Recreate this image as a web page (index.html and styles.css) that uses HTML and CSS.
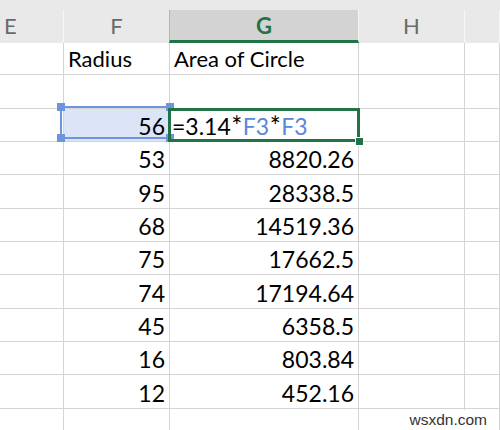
FILE: index.html
```html
<!DOCTYPE html>
<html>
<head>
<meta charset="utf-8">
<link rel="stylesheet" href="styles.css">
</head>
<body>
<div class="sheet">
  <div class="topband"></div>
  <div class="grid">
    <div class="hd hd-e">E</div>
    <div class="hd">F</div>
    <div class="hd hd-sel">G</div>
    <div class="hd">H</div>
    <div class="hd"></div>

    <div class="c"></div><div class="c txt">Radius</div><div class="c txt">Area of Circle</div><div class="c"></div><div class="c"></div>
    <div class="c"></div><div class="c"></div><div class="c"></div><div class="c"></div><div class="c"></div>

    <div class="c"></div>
    <div class="c num sel-src">
      <span class="blue-box"><i class="h tl"></i><i class="h tr"></i><i class="h bl"></i><i class="h br"></i></span>
      <span class="v">56</span>
    </div>
    <div class="c edit">=3.14<span class="op">*</span><span class="ref">F3</span><span class="op">*</span><span class="ref">F3</span><span class="green-box"><i class="fill"></i></span></div>
    <div class="c"></div><div class="c"></div>

    <div class="c"></div><div class="c num">53</div><div class="c num">8820.26</div><div class="c"></div><div class="c"></div>
    <div class="c"></div><div class="c num">95</div><div class="c num">28338.5</div><div class="c"></div><div class="c"></div>
    <div class="c"></div><div class="c num">68</div><div class="c num">14519.36</div><div class="c"></div><div class="c"></div>
    <div class="c"></div><div class="c num">75</div><div class="c num">17662.5</div><div class="c"></div><div class="c"></div>
    <div class="c"></div><div class="c num">74</div><div class="c num">17194.64</div><div class="c"></div><div class="c"></div>
    <div class="c"></div><div class="c num">45</div><div class="c num">6358.5</div><div class="c"></div><div class="c"></div>
    <div class="c"></div><div class="c num">16</div><div class="c num">803.84</div><div class="c"></div><div class="c"></div>
    <div class="c"></div><div class="c num">12</div><div class="c num">452.16</div><div class="c"></div><div class="c"></div>
    <div class="c"></div><div class="c"></div><div class="c"></div><div class="c"></div><div class="c"></div>
  </div>
  <div class="watermark">wsxdn.com</div>
</div>
</body>
</html>
```
FILE: styles.css
```css
* { box-sizing: border-box; }
html, body { margin: 0; padding: 0; background: #fff; }
.sheet {
  position: relative;
  width: 500px;
  height: 430px;
  overflow: hidden;
  font-family: Lato, "Open Sans", sans-serif;
  color: #000;
}
.topband { height: 10px; background: #e9e9e9; }
.grid {
  display: grid;
  grid-template-columns: 64px 106px 189px 106px 1fr;
  grid-template-rows: 33px 32.33px;
  grid-auto-rows: 33.333px;
}
.hd {
  background: #e9e9e9;
  border-right: 1px solid #f7f7f7;
  color: #6a6a6a;
  font-size: 22px;
  display: flex;
  align-items: center;
  justify-content: center;
  padding-bottom: 2px;
}
.hd-e { justify-content: flex-start; padding-left: 4px; }
.hd-sel {
  background: #d3d3d3;
  color: #217346;
  font-weight: bold;
  border-left: 1px solid #b5b5b5;
  margin-left: -1px;
  border-bottom: 3px solid #217346;
  padding-bottom: 0;
}
.c {
  border-right: 1px solid #d4d4d4;
  border-bottom: 1px solid #d4d4d4;
  font-size: 23px;
  display: flex;
  align-items: flex-end;
  padding: 0 4px 2px 4px;
  white-space: nowrap;
  line-height: 26px;
}
.txt { justify-content: flex-start; padding-left: 4px; font-size: 22px; }
.num { justify-content: flex-end; }
.sel-src { position: relative; background: #dce5f7; }
.sel-src .v { position: relative; }
.blue-box {
  position: absolute;
  left: -4px;
  top: -3px;
  right: -2px;
  bottom: 2px;
  border: 2px solid #6e94dd;
}
.h {
  position: absolute;
  width: 8px;
  height: 8px;
  background: #6e94dd;
}
.h.tl { left: -5px; top: -5px; }
.h.tr { right: -5px; top: -5px; }
.h.bl { left: -5px; bottom: -5px; }
.h.br { right: -5px; bottom: -5px; }
.edit { position: relative; padding-left: 2px; }
.op { font-size: 26px; padding: 0 0.5px; }
.ref { color: #5a86d9; }
.green-box {
  position: absolute;
  left: -2px;
  top: -1px;
  right: -2px;
  bottom: -1px;
  border: 3px solid #217346;
}
.fill {
  position: absolute;
  right: -6px;
  bottom: -6px;
  width: 7px;
  height: 7px;
  background: #217346;
  outline: 1px solid #fff;
}
.watermark {
  position: absolute;
  right: 11px;
  bottom: 0;
  padding: 1px 2px 1px 6px;
  background: #fff;
  font-family: "Liberation Sans", Arial, sans-serif;
  font-size: 15.5px;
  color: #333;
}
```
